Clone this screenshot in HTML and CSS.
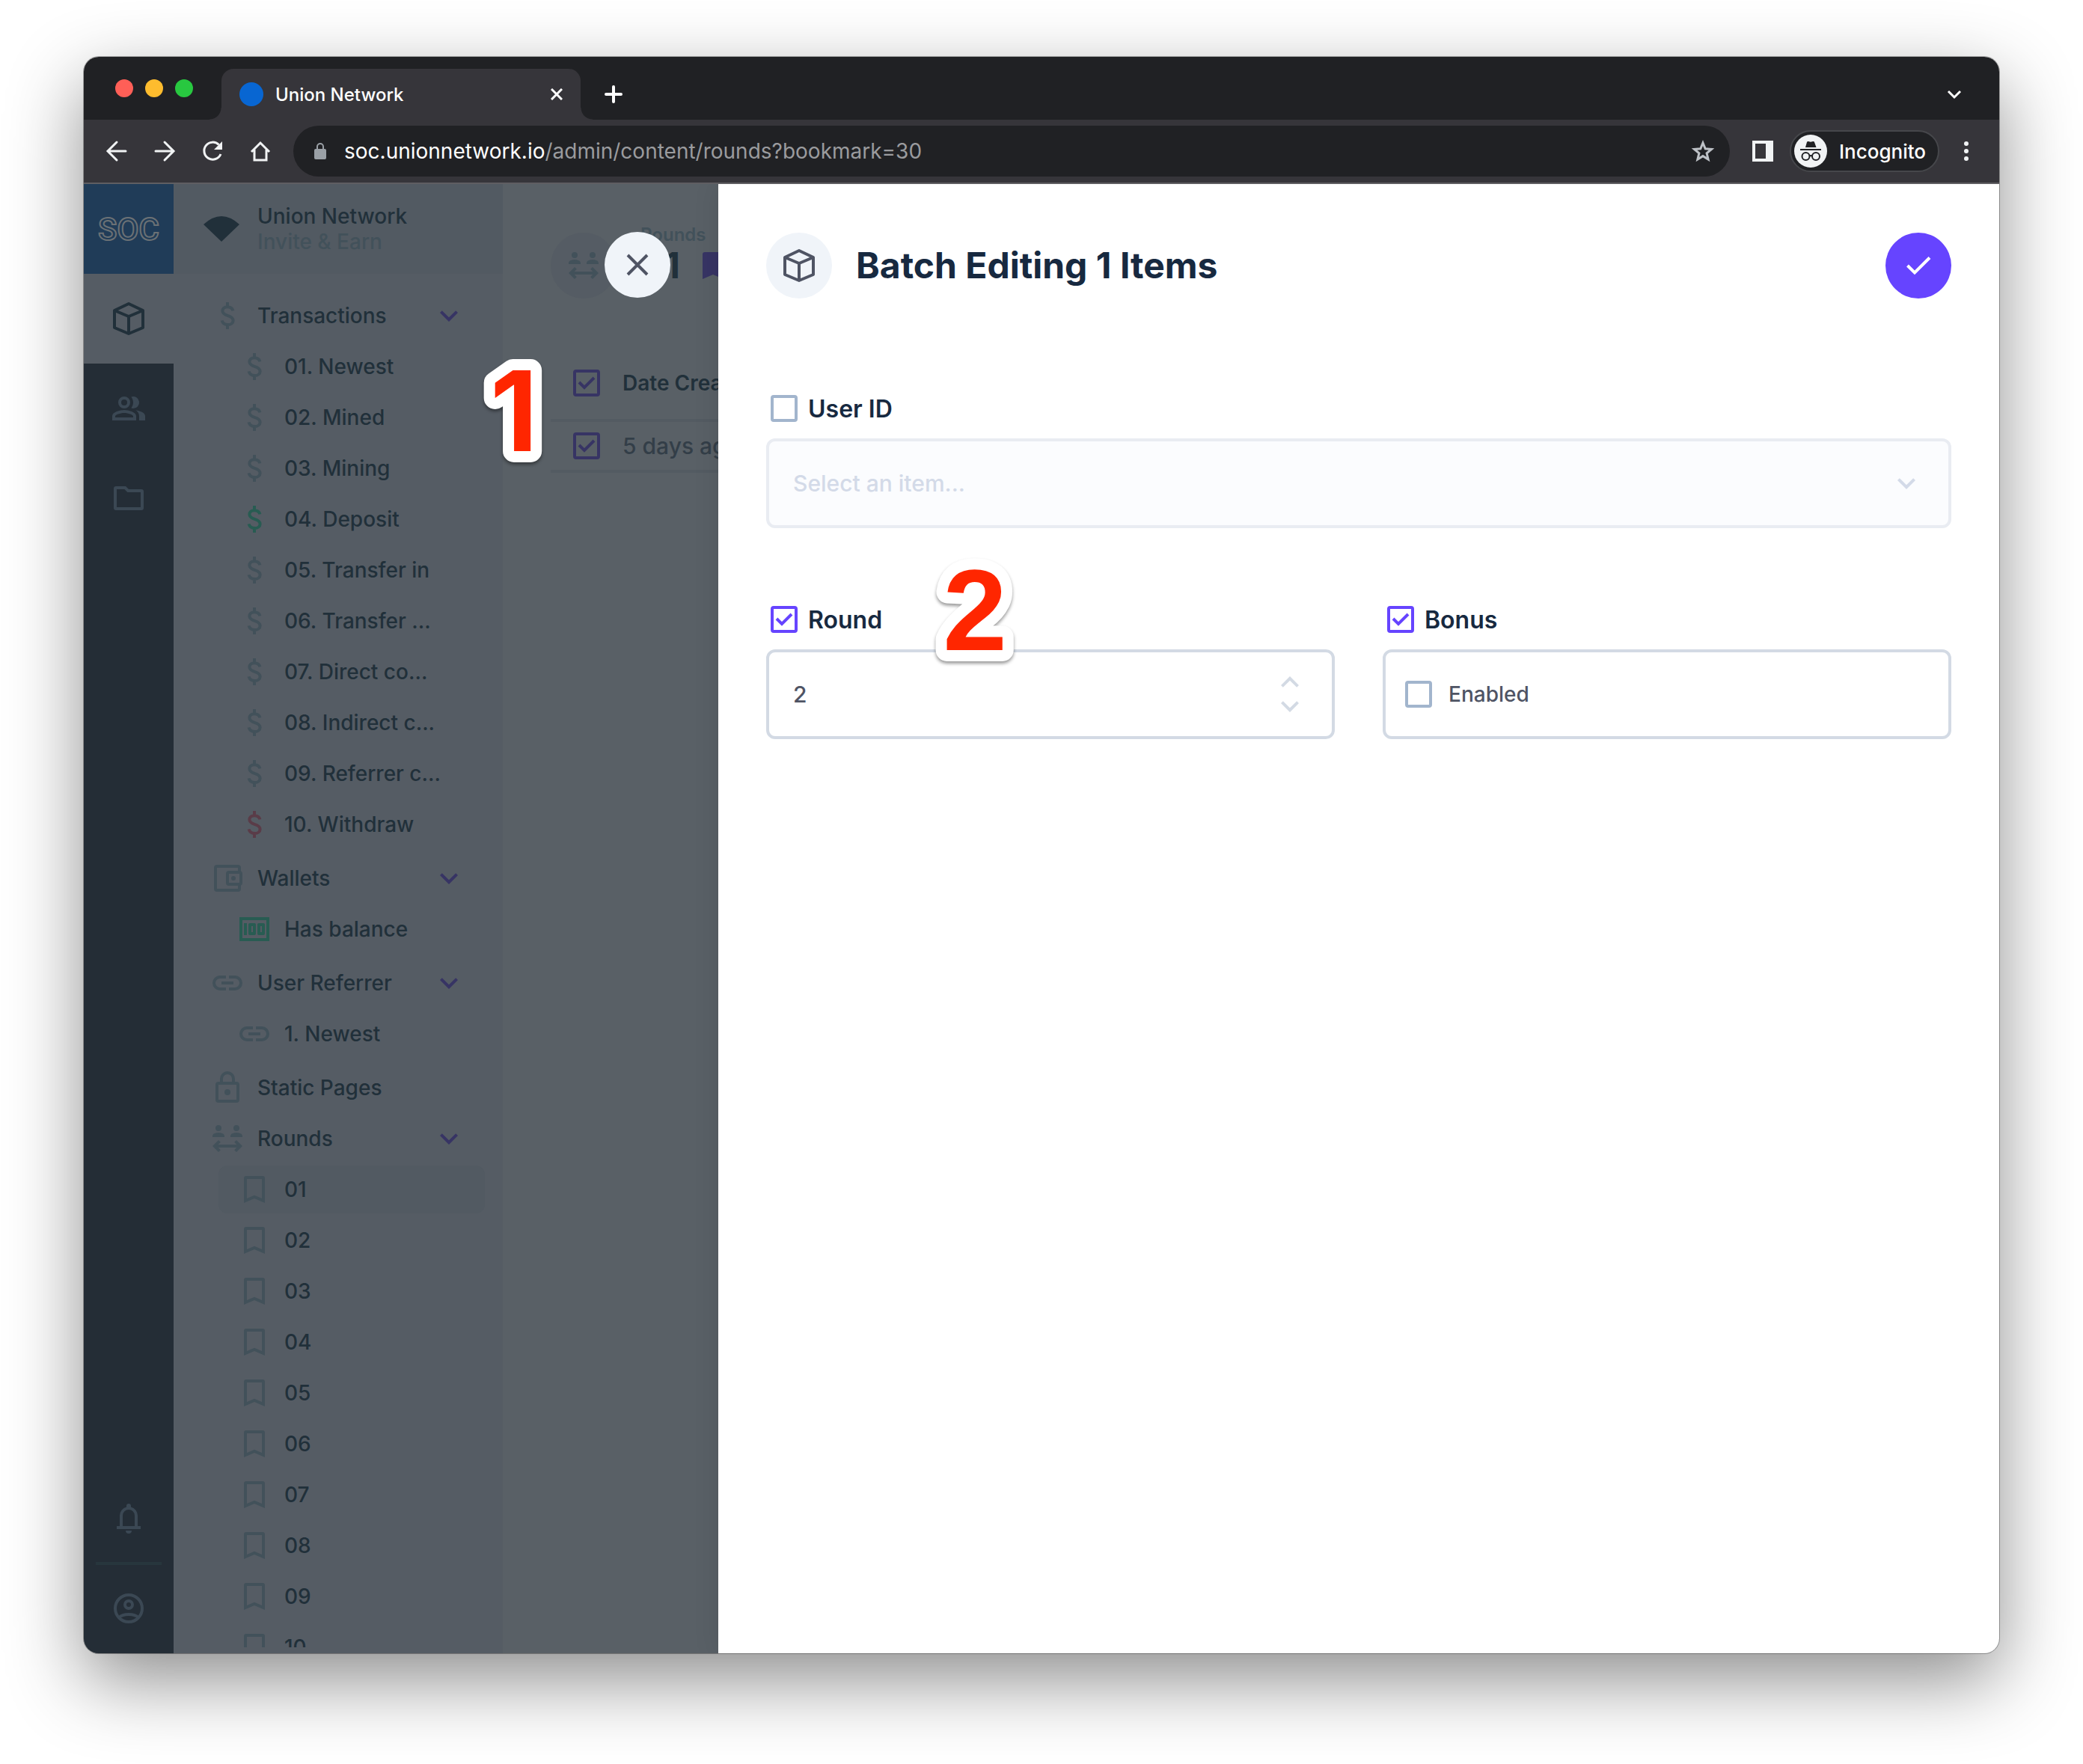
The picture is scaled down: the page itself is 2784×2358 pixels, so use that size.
FILE: index.html
```html
<!DOCTYPE html>
<html lang="en">
<head>
  <meta charset="UTF-8">
  <meta name="viewport" content="width=device-width, initial-scale=1.0">
  <title>Union Network</title>
  <link rel="stylesheet" href="styles.css">
</head>
<body>
  <!-- icon sprite -->
  <svg class="sprite" aria-hidden="true">
    <symbol id="i-dollar" viewBox="0 0 24 24"><path fill="none" stroke="currentColor" stroke-width="2" d="M15.7 8.7C15.3 7 13.9 6.1 12 6.1c-2.1 0-3.3 1.2-3.3 2.7 0 1.8 1.4 2.5 3.4 3.1 2.2.7 3.7 1.4 3.7 3.3 0 1.7-1.5 2.8-3.6 2.8-2.1 0-3.5-1.1-3.9-2.8M12 3v3M12 18v3"/></symbol>
    <symbol id="i-wallet" viewBox="0 0 24 24"><g fill="none" stroke="currentColor" stroke-width="2"><path d="M20 7.500V5a1 1 0 0 0-1-1H5a1 1 0 0 0-1 1v14a1 1 0 0 0 1 1h14a1 1 0 0 0 1-1v-2.500"/><rect x="12" y="8" width="9" height="8" rx="1"/></g><circle cx="16" cy="12" r="1.500" fill="currentColor"/></symbol>
    <symbol id="i-money" viewBox="0 0 24 24"><path fill="currentColor" d="M5 8h2v8H5zm7 0H9c-.55 0-1 .45-1 1v6c0 .55.45 1 1 1h3c.55 0 1-.45 1-1V9c0-.55-.45-1-1-1zm-1 6h-1v-4h1v4zm7-6h-3c-.55 0-1 .45-1 1v6c0 .55.45 1 1 1h3c.55 0 1-.45 1-1V9c0-.55-.45-1-1-1zm-1 6h-1v-4h1v4zM2 4v16h20V4H2zm2 14V6h16v12H4z"/></symbol>
    <symbol id="i-link" viewBox="0 0 24 24"><path fill="none" stroke="currentColor" stroke-width="2" d="M11 8H7a4 4 0 0 0 0 8h4M13 8h4a4 4 0 0 1 0 8h-4M8 12h8"/></symbol>
    <symbol id="i-lock" viewBox="0 0 24 24"><path fill="none" stroke="currentColor" stroke-width="2" d="M6 9h12a1 1 0 0 1 1 1v10a1 1 0 0 1-1 1H6a1 1 0 0 1-1-1V10a1 1 0 0 1 1-1zM8 9V6a4 4 0 0 1 8 0v3"/><circle cx="12" cy="15" r="2" fill="currentColor"/></symbol>
    <symbol id="i-rounds" viewBox="0 0 24 24"><path fill="currentColor" d="M4 5a2 2 0 1 1 4 0 2 2 0 0 1-4 0zM8.780 8.580a7 7 0 0 0-5.560 0C2.480 8.900 2 9.620 2 10.430V11h8v-.57c0-.81-.48-1.530-1.220-1.850zM18 7a2 2 0 1 0 0-4 2 2 0 0 0 0 4zM20.780 8.580a7 7 0 0 0-5.560 0c-.74.32-1.220 1.040-1.220 1.850V11h8v-.57c0-.81-.48-1.530-1.220-1.850zM22 17l-4-4-1.410 1.410L18.170 16H5.830l1.580-1.590L6 13l-4 4 4 4 1.410-1.410L5.830 18h12.340l-1.580 1.590L18 21z"/></symbol>
    <symbol id="i-bookmark" viewBox="0 0 24 24"><path fill="currentColor" fill-rule="evenodd" d="M6.500 3h11A1.500 1.500 0 0 1 19 4.500V21l-7-3-7 3V4.500A1.500 1.500 0 0 1 6.500 3zM17 18V5H7v13l5-2.180z"/></symbol>
    <symbol id="i-bookmark-fill" viewBox="0 0 24 24"><path fill="currentColor" d="M6.500 3h11A1.500 1.500 0 0 1 19 4.500V21l-7-3-7 3V4.500A1.500 1.500 0 0 1 6.500 3z"/></symbol>
    <symbol id="i-chevron" viewBox="0 0 24 24"><path fill="currentColor" d="M16.590 8.590 12 13.170 7.410 8.590 6 10l6 6 6-6z"/></symbol>
    <symbol id="i-box" viewBox="0 0 48 48"><path fill="none" stroke="currentColor" stroke-width="4" stroke-linejoin="round" d="M24 4l19 9v23l-19 8-19-8V13zM5 13l19 8 19-8M24 21v23"/></symbol>
  </svg>

  <div class="window">
    <header class="titlebar">
      <div class="lights">
        <span class="light light-red"></span>
        <span class="light light-yellow"></span>
        <span class="light light-green"></span>
      </div>
      <div class="tab">
        <span class="favicon"></span>
        <span class="tab-title">Union Network</span>
        <button class="chrome-button" aria-label="Close tab">
          <svg width="16" height="16" viewBox="0 0 16 16"><path stroke="#fff" stroke-width="3" d="M1 1l14 14M15 1L1 15"/></svg>
        </button>
      </div>
      <button class="chrome-button new-tab" aria-label="New tab">
        <svg width="24" height="24" viewBox="0 0 24 24"><path stroke="#fff" stroke-width="4" stroke-linecap="round" d="M12 2v20M2 12h20"/></svg>
      </button>
      <button class="chrome-button tab-search" aria-label="Search tabs">
        <svg width="24" height="24" viewBox="0 0 24 24"><path fill="none" stroke="#fff" stroke-width="3" d="M4 8l8 8 8-8"/></svg>
      </button>
    </header>

    <div class="toolbar">
      <div class="toolbar-nav">
        <button class="chrome-button" aria-label="Back">
          <svg width="32" height="32" viewBox="0 0 32 32"><path fill="none" stroke="#f1f3f4" stroke-width="3" stroke-linecap="round" d="M28 16H5M16 4L4 16l12 12"/></svg>
        </button>
        <button class="chrome-button" aria-label="Forward">
          <svg width="32" height="32" viewBox="0 0 32 32"><path fill="none" stroke="#f1f3f4" stroke-width="3" stroke-linecap="round" d="M4 16h23M16 4l12 12-12 12"/></svg>
        </button>
        <button class="chrome-button" aria-label="Reload">
          <svg width="32" height="32" viewBox="0 0 32 32"><path fill="none" stroke="#f1f3f4" stroke-width="3" d="M27 20a11.500 11.500 0 1 1-2.500-12.500"/><path fill="#f1f3f4" d="M29 3v11H18z"/></svg>
        </button>
        <button class="chrome-button" aria-label="Home">
          <svg width="32" height="32" viewBox="0 0 32 32"><path fill="none" stroke="#f1f3f4" stroke-width="3" d="M4 17L16 5l12 12M8 14v14h16V14"/></svg>
        </button>
      </div>
      <div class="omnibox">
        <svg width="32" height="32" viewBox="0 0 32 32"><rect x="8" y="13" width="16" height="14" rx="2" fill="#9aa0a6"/><path fill="none" stroke="#9aa0a6" stroke-width="2" d="M12 14v-4a4 4 0 0 1 8 0v4"/></svg>
        <span class="url"><span class="url-host">soc.unionnetwork.io</span>/admin/content/rounds?bookmark=30</span>
        <button class="chrome-button" aria-label="Bookmark this tab">
          <svg width="32" height="32" viewBox="0 0 32 32"><path fill="none" stroke="#bdc1c6" stroke-width="3" d="M16 5l3.200 7.800 8.300.6-6.400 5.400 2 8.200-7.100-4.400L8.900 27l2-8.200-6.400-5.400 8.300-.6z"/></svg>
        </button>
      </div>
      <button class="chrome-button side-panel" aria-label="Side panel">
        <svg width="28" height="28" viewBox="0 0 28 28"><path fill="#f1f3f4" fill-rule="evenodd" d="M0 0h28v28H0zM4 4v20h14V4z"/></svg>
      </button>
      <button class="incognito">
        <svg width="44" height="44" viewBox="0 0 44 44">
          <circle cx="22" cy="22" r="22" fill="#f1f3f4"/>
          <path fill="#202124" d="M15 17l2-7q.5-1.500 2-1l3 .8 3-.8q1.500-.5 2 1l2.500 7zM8 19h28v2H8z"/>
          <g fill="none" stroke="#202124" stroke-width="2"><circle cx="15.500" cy="29" r="5"/><circle cx="29" cy="29" r="5"/><path d="M20 28.500q2-1 4.500 0"/></g>
        </svg>
        Incognito
      </button>
      <button class="chrome-button" aria-label="Menu">
        <svg width="8" height="28" viewBox="0 0 8 28" fill="#f1f3f4"><circle cx="4" cy="4" r="3"/><circle cx="4" cy="14" r="3"/><circle cx="4" cy="24" r="3"/></svg>
      </button>
    </div>

    <div class="app">
      <nav class="module-bar" aria-label="Modules">
        <a class="module logo" href="#" aria-label="SOC">
          <svg width="120" height="60" viewBox="0 0 120 60"><text class="logo-text" x="60" y="45" text-anchor="middle">SOC</text></svg>
        </a>
        <a class="module active" href="#" aria-label="Content"><svg class="icon"><use href="#i-box"/></svg></a>
        <a class="module" href="#" aria-label="Users">
          <svg class="icon" viewBox="0 0 24 24"><path fill="currentColor" d="M16.670 13.130C18.040 14.060 19 15.320 19 17v3h4v-3c0-2.180-3.570-3.470-6.330-3.870zM15 12a4 4 0 1 0-1.330-7.760C14.500 5.270 15 6.580 15 8s-.5 2.730-1.330 3.760c.42.14.86.24 1.330.24zM9 12a4 4 0 1 0 0-8 4 4 0 0 0 0 8zm0-6a2 2 0 1 1 0 4 2 2 0 0 1 0-4zM9 13c-2.670 0-8 1.340-8 4v3h16v-3c0-2.660-5.330-4-8-4zm6 5H3v-.99C3.200 16.290 6.300 15 9 15s5.800 1.290 6 2v1z"/></svg>
        </a>
        <a class="module" href="#" aria-label="Files">
          <svg class="icon" viewBox="0 0 24 24"><path fill="currentColor" d="M9.170 6l2 2H20v10H4V6h5.170M10 4H3.500A1.500 1.500 0 0 0 2 5.500v13A1.500 1.500 0 0 0 3.500 20h17a1.500 1.500 0 0 0 1.500-1.500v-11A1.500 1.500 0 0 0 20.500 6H12z"/></svg>
        </a>
        <a class="module module-bell" href="#" aria-label="Notifications">
          <svg class="icon" viewBox="0 0 24 24"><path fill="currentColor" fill-rule="evenodd" d="M4 19v-2h2v-7a6 6 0 0 1 4.500-5.800v-.7a1.500 1.500 0 0 1 3 0v.7A6 6 0 0 1 18 10v7h2v2zM8 17h8v-7a4 4 0 0 0-8 0zM10 20h4a2 2 0 0 1-4 0z"/></svg>
        </a>
        <hr class="module-divider">
        <a class="module" href="#" aria-label="Account">
          <svg class="icon" viewBox="0 0 24 24"><g fill="none" stroke="currentColor" stroke-width="2"><circle cx="12" cy="12" r="9"/><circle cx="12" cy="9.500" r="2.500"/><path d="M5.500 18.200C7 16.600 9.500 16 12 16s5 .6 6.500 2.200"/></g></svg>
        </a>
      </nav>

      <aside class="sidebar">
        <div class="project">
          <svg width="48" height="34" viewBox="0 0 48 34"><path fill="currentColor" d="M0 11Q24-11 48 11L24 34z"/></svg>
          <div>
            <div class="project-name">Union Network</div>
            <div class="project-note">Invite &amp; Earn</div>
          </div>
        </div>
        <nav class="nav" aria-label="Content">
          <a class="nav-item" href="#"><svg class="icon"><use href="#i-dollar"/></svg><span>Transactions</span><svg class="icon toggle"><use href="#i-chevron"/></svg></a>
          <div class="nav-children">
            <a class="nav-item" href="#"><svg class="icon"><use href="#i-dollar"/></svg><span>01. Newest</span></a>
            <a class="nav-item" href="#"><svg class="icon"><use href="#i-dollar"/></svg><span>02. Mined</span></a>
            <a class="nav-item" href="#"><svg class="icon"><use href="#i-dollar"/></svg><span>03. Mining</span></a>
            <a class="nav-item" href="#"><svg class="icon green"><use href="#i-dollar"/></svg><span>04. Deposit</span></a>
            <a class="nav-item" href="#"><svg class="icon"><use href="#i-dollar"/></svg><span>05. Transfer in</span></a>
            <a class="nav-item" href="#"><svg class="icon"><use href="#i-dollar"/></svg><span>06. Transfer ...</span></a>
            <a class="nav-item" href="#"><svg class="icon"><use href="#i-dollar"/></svg><span>07. Direct co...</span></a>
            <a class="nav-item" href="#"><svg class="icon"><use href="#i-dollar"/></svg><span>08. Indirect c...</span></a>
            <a class="nav-item" href="#"><svg class="icon"><use href="#i-dollar"/></svg><span>09. Referrer c...</span></a>
            <a class="nav-item" href="#"><svg class="icon red"><use href="#i-dollar"/></svg><span>10. Withdraw</span></a>
          </div>
          <a class="nav-item" href="#"><svg class="icon"><use href="#i-wallet"/></svg><span>Wallets</span><svg class="icon toggle"><use href="#i-chevron"/></svg></a>
          <div class="nav-children">
            <a class="nav-item" href="#"><svg class="icon green"><use href="#i-money"/></svg><span>Has balance</span></a>
          </div>
          <a class="nav-item" href="#"><svg class="icon"><use href="#i-link"/></svg><span>User Referrer</span><svg class="icon toggle"><use href="#i-chevron"/></svg></a>
          <div class="nav-children">
            <a class="nav-item" href="#"><svg class="icon"><use href="#i-link"/></svg><span>1. Newest</span></a>
          </div>
          <a class="nav-item" href="#"><svg class="icon"><use href="#i-lock"/></svg><span>Static Pages</span></a>
          <a class="nav-item" href="#"><svg class="icon"><use href="#i-rounds"/></svg><span>Rounds</span><svg class="icon toggle"><use href="#i-chevron"/></svg></a>
          <div class="nav-children">
            <a class="nav-item current" href="#"><svg class="icon"><use href="#i-bookmark"/></svg><span>01</span></a>
            <a class="nav-item" href="#"><svg class="icon"><use href="#i-bookmark"/></svg><span>02</span></a>
            <a class="nav-item" href="#"><svg class="icon"><use href="#i-bookmark"/></svg><span>03</span></a>
            <a class="nav-item" href="#"><svg class="icon"><use href="#i-bookmark"/></svg><span>04</span></a>
            <a class="nav-item" href="#"><svg class="icon"><use href="#i-bookmark"/></svg><span>05</span></a>
            <a class="nav-item" href="#"><svg class="icon"><use href="#i-bookmark"/></svg><span>06</span></a>
            <a class="nav-item" href="#"><svg class="icon"><use href="#i-bookmark"/></svg><span>07</span></a>
            <a class="nav-item" href="#"><svg class="icon"><use href="#i-bookmark"/></svg><span>08</span></a>
            <a class="nav-item" href="#"><svg class="icon"><use href="#i-bookmark"/></svg><span>09</span></a>
            <a class="nav-item" href="#"><svg class="icon"><use href="#i-bookmark"/></svg><span>10</span></a>
          </div>
        </nav>
      </aside>

      <main class="content">
        <div class="page-header">
          <span class="round-icon dim"><svg class="icon"><use href="#i-rounds"/></svg></span>
          <div>
            <div class="breadcrumb">Rounds</div>
            <h1 class="title">01 <svg class="icon"><use href="#i-bookmark-fill"/></svg></h1>
          </div>
        </div>
        <table class="items">
          <thead>
            <tr>
              <th class="select-cell"><input class="checkbox" type="checkbox" aria-label="Select all" checked></th>
              <th>Date Created</th>
            </tr>
          </thead>
          <tbody>
            <tr>
              <td class="select-cell"><input class="checkbox" type="checkbox" aria-label="Select item" checked></td>
              <td>5 days ago</td>
            </tr>
          </tbody>
        </table>
      </main>

      <section class="drawer" aria-label="Batch edit">
        <button class="round-icon close" aria-label="Close">
          <svg width="48" height="48" viewBox="0 0 48 48"><path stroke="currentColor" stroke-width="4" d="M11 11l26 26M37 11L11 37"/></svg>
        </button>
        <div class="page-header">
          <span class="round-icon"><svg class="icon"><use href="#i-box"/></svg></span>
          <h2 class="title">Batch Editing 1 Items</h2>
          <button class="round-icon save" aria-label="Save">
            <svg width="48" height="48" viewBox="0 0 48 48"><path fill="none" stroke="currentColor" stroke-width="4" d="M9.500 24L19 33.500 39 13.500"/></svg>
          </button>
        </div>
        <form class="form">
          <div class="field full">
            <div class="field-label">
              <input class="checkbox" type="checkbox" id="edit-user">
              <label for="edit-user">User ID</label>
            </div>
            <select class="control select" aria-label="User ID" disabled>
              <option>Select an item...</option>
            </select>
          </div>
          <div class="field">
            <div class="field-label">
              <input class="checkbox" type="checkbox" id="edit-round" checked>
              <label for="edit-round">Round</label>
            </div>
            <div class="control number">
              <input type="number" value="2" aria-label="Round">
              <div class="steps">
                <button type="button" aria-label="Increase"><svg class="icon flip"><use href="#i-chevron"/></svg></button>
                <button type="button" aria-label="Decrease"><svg class="icon"><use href="#i-chevron"/></svg></button>
              </div>
            </div>
          </div>
          <div class="field">
            <div class="field-label">
              <input class="checkbox" type="checkbox" id="edit-bonus" checked>
              <label for="edit-bonus">Bonus</label>
            </div>
            <div class="control toggle-field">
              <input class="checkbox" type="checkbox" id="bonus">
              <label for="bonus">Enabled</label>
            </div>
          </div>
        </form>
      </section>
    </div>

    <!-- step markers lying over the window -->
    <svg class="marker marker-one" viewBox="0 0 130 160"><text x="65" y="130" text-anchor="middle">1</text></svg>
    <svg class="marker marker-two" viewBox="0 0 130 160"><text x="65" y="130" text-anchor="middle">2</text></svg>
  </div>
</body>
</html>
```
FILE: styles.css
```css
* {
  box-sizing: border-box;
}

body {
  margin: 0;
  height: 100vh;
  padding: 76px 112px 148px;
  display: flex;
  background: #fff;
  font-family: Inter, sans-serif;
  font-size: 28px;
  font-weight: 500;
}

a {
  color: inherit;
  text-decoration: none;
}

button {
  font: inherit;
  border: none;
  padding: 0;
  background: none;
  cursor: pointer;
}

svg {
  display: block;
  flex: none;
}

.sprite {
  position: absolute;
  width: 0;
  height: 0;
}

.icon {
  width: 48px;
  height: 48px;
}

.window {
  position: relative;
  flex: 1;
  min-width: 0;
  display: flex;
  flex-direction: column;
  border-radius: 20px;
  box-shadow: 0 0 0 1px rgba(0, 0, 0, 0.3), 0 36px 100px rgba(0, 0, 0, 0.45);
}

/* browser chrome */

.titlebar {
  height: 84px;
  padding: 0 48px 0 42px;
  display: flex;
  align-items: flex-end;
  background: #202124;
  border-radius: 20px 20px 0 0;
}

.chrome-button {
  display: flex;
  align-items: center;
  justify-content: center;
}

.lights {
  display: flex;
  align-items: center;
  align-self: stretch;
  gap: 16px;
  margin-right: 38px;
}

.light {
  width: 24px;
  height: 24px;
  border-radius: 50%;
}

.light-red {
  background: #ff5f57;
}

.light-yellow {
  background: #febc2e;
}

.light-green {
  background: #28c840;
}

.tab {
  position: relative;
  width: 480px;
  height: 68px;
  padding: 0 24px;
  display: flex;
  align-items: center;
  gap: 16px;
  background: #36353a;
  border-radius: 16px 16px 0 0;
}

.tab::before,
.tab::after {
  content: "";
  position: absolute;
  bottom: 0;
  width: 16px;
  height: 16px;
}

.tab::before {
  right: 100%;
  background: radial-gradient(circle at 0 0, transparent 15px, #36353a 16px);
}

.tab::after {
  left: 100%;
  background: radial-gradient(circle at 100% 0, transparent 15px, #36353a 16px);
}

.favicon {
  width: 32px;
  height: 32px;
  border-radius: 50%;
  background: #0866d2;
}

.tab-title {
  flex: 1;
  font-size: 24px;
  color: #fff;
}

.new-tab {
  height: 68px;
  margin-left: 32px;
}

.tab-search {
  height: 68px;
  margin-left: auto;
}

.toolbar {
  height: 86px;
  padding: 0 40px 0 20px;
  display: flex;
  align-items: center;
  gap: 20px;
  background: #36353a;
  border-bottom: 2px solid #5f5e62;
}

.toolbar-nav {
  display: flex;
  gap: 16px;
}

.toolbar-nav .chrome-button {
  width: 48px;
  height: 48px;
}

.omnibox {
  flex: 1;
  height: 68px;
  padding: 0 20px;
  display: flex;
  align-items: center;
  gap: 16px;
  background: #202124;
  border-radius: 34px;
}

.url {
  flex: 1;
  font-weight: 400;
  color: #9a9b9e;
}

.url-host {
  color: #fff;
}

.side-panel {
  margin: 0 2px 0 10px;
}

.incognito {
  height: 56px;
  width: 200px;
  padding-left: 4px;
  margin-right: 12px;
  display: flex;
  align-items: center;
  gap: 16px;
  font-size: 26px;
  color: #fff;
  background: #202124;
  border: 2px solid #46474b;
  border-radius: 28px;
}

/* app behind the drawer, in its dimmed state */

.app {
  position: relative;
  flex: 1;
  min-height: 0;
  display: flex;
  overflow: hidden;
  border-radius: 0 0 20px 20px;
  background: #596066;
}

.module-bar {
  width: 120px;
  display: flex;
  flex-direction: column;
  background: #242d36;
  color: #3b4854;
}

.module {
  height: 120px;
  display: flex;
  align-items: center;
  justify-content: center;
}

.logo {
  background: #203c58;
}

.logo-text {
  font-family: Roboto, sans-serif;
  font-size: 42px;
  font-weight: 500;
  fill: none;
  stroke: #6b7175;
  stroke-width: 2;
}

.module.active {
  background: #555c64;
  color: #21303a;
}

.module-bell {
  margin-top: auto;
}

.module-divider {
  height: 4px;
  width: 88px;
  margin: -2px auto;
  border: none;
  background: #27363d;
}

.sidebar {
  width: 440px;
  padding-bottom: 8px;
  display: flex;
  flex-direction: column;
  background: #555c64;
  color: #21303a;
}

.project {
  height: 120px;
  flex: none;
  padding-left: 40px;
  display: flex;
  align-items: center;
  gap: 24px;
  line-height: 34px;
  background: #525a62;
}

.project-note {
  color: #42515a;
}

.nav {
  flex: 1;
  min-height: 0;
  padding: 24px 24px 0;
  display: flex;
  flex-direction: column;
  gap: 4px;
  overflow: hidden;
}

.nav-children {
  flex: none;
  display: flex;
  flex-direction: column;
  gap: 4px;
  margin-bottom: 4px;
  padding-left: 36px;
}

.nav-item {
  flex: none;
  height: 64px;
  padding: 0 24px;
  display: flex;
  align-items: center;
  gap: 16px;
  border-radius: 12px;
}

.nav-item .icon {
  color: #42515a;
}

.nav-item .green {
  color: #285c52;
}

.nav-item .red {
  color: #5a3c48;
}

.nav-item .toggle {
  margin-left: auto;
  color: #373464;
}

.current {
  background: #525a62;
}

.content {
  flex: 1;
  min-width: 0;
  padding: 0 64px;
  color: #21303a;
}

.page-header {
  height: 218px;
  display: flex;
  align-items: center;
  gap: 32px;
}

.round-icon {
  flex: none;
  width: 88px;
  height: 88px;
  display: flex;
  align-items: center;
  justify-content: center;
  border-radius: 50%;
  background: #f0f4f9;
  color: #4f5464;
}

.round-icon.dim {
  background: #555c64;
  color: #42515a;
}

/* sits above the title without moving it off centre */
.breadcrumb {
  margin-top: -24px;
  font-size: 24px;
  font-weight: 600;
  line-height: 24px;
  color: #42515a;
}

.title {
  margin: 0;
  display: flex;
  align-items: center;
  gap: 20px;
  font-size: 48px;
  line-height: 58px;
  font-weight: 700;
}

.title .icon {
  color: #373464;
}

.items {
  width: 100%;
  border-spacing: 0;
}

.items th,
.items td {
  padding: 0;
  text-align: left;
  border-bottom: 4px solid #535b62;
}

.items th {
  height: 100px;
  font-weight: 600;
}

.items td {
  height: 68px;
  font-size: 30px;
  color: #333e48;
}

.items .select-cell {
  width: 96px;
  padding-left: 30px;
}

.checkbox {
  appearance: none;
  flex: none;
  display: block;
  width: 36px;
  height: 36px;
  margin: 0;
  border: 4px solid #a2b5cd;
  border-radius: 4px;
}

.checkbox:checked {
  border-color: #6644ff;
  background: url("data:image/svg+xml,%3Csvg xmlns='http://www.w3.org/2000/svg' viewBox='0 0 36 36'%3E%3Cpath fill='none' stroke='%236644ff' stroke-width='4' d='M8 17l7 7 13-13'/%3E%3C/svg%3E") border-box;
}

.items .checkbox:checked {
  border-color: #373464;
  background-image: url("data:image/svg+xml,%3Csvg xmlns='http://www.w3.org/2000/svg' viewBox='0 0 36 36'%3E%3Cpath fill='none' stroke='%23373464' stroke-width='4' d='M8 17l7 7 13-13'/%3E%3C/svg%3E");
}

/* drawer */

.drawer {
  position: absolute;
  top: 0;
  right: 0;
  bottom: 0;
  width: 100%;
  max-width: 1712px;
  padding: 0 64px;
  background: #fff;
  color: #172940;
  box-shadow: 0 0 32px rgba(0, 0, 0, 0.1);
}

.close {
  position: absolute;
  top: 64px;
  right: 100%;
  margin-right: 64px;
}

.save {
  margin-left: auto;
  background: #6644ff;
  color: #fff;
}

.form {
  padding-top: 58px;
  display: grid;
  grid-template-columns: 1fr 1fr;
  gap: 98px 64px;
}

.full {
  grid-column: 1 / -1;
}

.field-label {
  height: 48px;
  margin-bottom: 16px;
  padding-left: 6px;
  display: flex;
  align-items: center;
  gap: 14px;
  font-size: 32px;
  font-weight: 600;
}

.control {
  width: 100%;
  height: 120px;
  padding: 0 32px;
  display: flex;
  align-items: center;
  border: 4px solid #d3dae4;
  border-radius: 12px;
  background: #fff;
  color: #4f5464;
}

.select {
  appearance: none;
  font: inherit;
  font-size: 30px;
  opacity: 1;
  color: #d3dae8;
  border-color: #e9ecf2;
  background: #fbfcfe url("data:image/svg+xml,%3Csvg xmlns='http://www.w3.org/2000/svg' viewBox='0 0 24 24'%3E%3Cpath fill='%23d3dae8' d='M16.590 8.590 12 13.170 7.410 8.590 6 10l6 6 6-6z'/%3E%3C/svg%3E") no-repeat right 32px center / 48px;
}

.number input {
  appearance: textfield;
  flex: 1;
  min-width: 0;
  padding: 0;
  border: none;
  outline: none;
  background: none;
  font: inherit;
  font-size: 30px;
  color: inherit;
}

.steps {
  color: #d3dae4;
}

.steps button {
  display: flex;
  align-items: center;
  height: 32px;
  color: inherit;
}

.flip {
  transform: scaleY(-1);
}

.toggle-field {
  gap: 22px;
  padding: 0 26px;
}

/* markers */

.marker {
  position: absolute;
  width: 130px;
  height: 160px;
  overflow: visible;
  filter: drop-shadow(0 3px 2px rgba(0, 0, 0, 0.4));
}

.marker text {
  font-weight: 700;
  fill: #ff2600;
  stroke: #fff;
  stroke-width: 30px;
  stroke-linejoin: round;
  paint-order: stroke;
}

.marker-one {
  left: 510px;
  top: 397px;
}

.marker-one text {
  font-family: Inter, sans-serif;
  font-size: 148px;
}

.marker-two {
  left: 1126px;
  top: 663px;
}

.marker-two text {
  font-family: "Liberation Sans", Arial, sans-serif;
  font-size: 154px;
}
```
